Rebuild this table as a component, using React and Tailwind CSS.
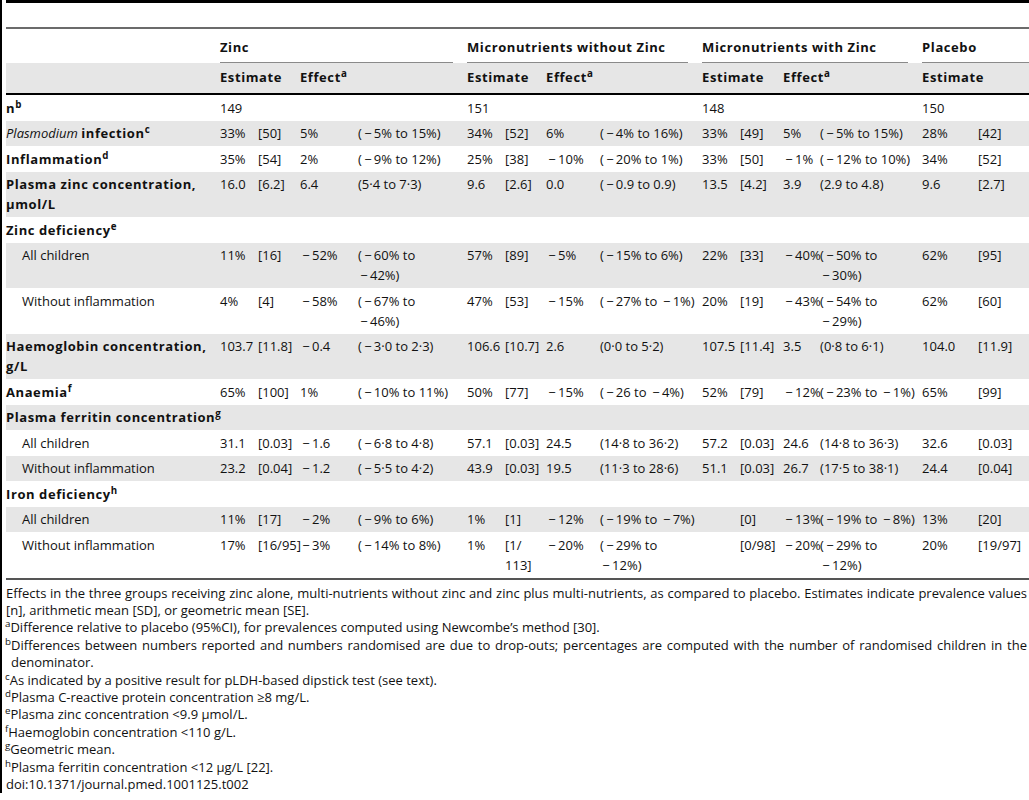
import React from "react";

const M = "−";

function fmtLine(s, key) {
  const parts = s.split(M);
  const out = [];
  parts.forEach((p, i) => {
    if (i > 0)
      out.push(
        <span key={key + "m" + i} className="inline-block w-[12px] text-center">
          {M}
        </span>
      );
    if (p) out.push(<span key={key + "p" + i}>{p}</span>);
  });
  return out;
}

function Cell({ text }) {
  const lines = (text || "").split("\n");
  return (
    <td className="p-0 py-[2.75px] align-top whitespace-nowrap leading-[20px]">
      {lines.map((l, i) => (
        <React.Fragment key={i}>
          {i > 0 && <br />}
          {fmtLine(l, "l" + i)}
        </React.Fragment>
      ))}
    </td>
  );
}

const B = "font-bold tracking-[0.045em]";

const rows = [
  {
    label: (
      <span className={B}>
        n<sup>b</sup>
      </span>
    ),
    vals: ["149", "", "", "", "151", "", "", "", "148", "", "", "", "150", ""],
    shaded: false,
  },
  {
    label: (
      <span>
        <span className="italic">Plasmodium</span>{" "}
        <span className={B}>
          infection<sup>c</sup>
        </span>
      </span>
    ),
    vals: ["33%", "[50]", "5%", "(−5% to 15%)", "34%", "[52]", "6%", "(−4% to 16%)", "33%", "[49]", "5%", "(−5% to 15%)", "28%", "[42]"],
    shaded: true,
  },
  {
    label: (
      <span className={B}>
        Inflammation<sup>d</sup>
      </span>
    ),
    vals: ["35%", "[54]", "2%", "(−9% to 12%)", "25%", "[38]", "−10%", "(−20% to 1%)", "33%", "[50]", "−1%", "(−12% to 10%)", "34%", "[52]"],
    shaded: false,
  },
  {
    label: (
      <span className={B}>
        Plasma zinc concentration,
        <br />
        μmol/L
      </span>
    ),
    vals: ["16.0", "[6.2]", "6.4", "(5·4 to 7·3)", "9.6", "[2.6]", "0.0", "(−0.9 to 0.9)", "13.5", "[4.2]", "3.9", "(2.9 to 4.8)", "9.6", "[2.7]"],
    shaded: true,
  },
  {
    label: (
      <span className={B}>
        Zinc deficiency<sup>e</sup>
      </span>
    ),
    vals: [],
    shaded: false,
  },
  {
    label: "All children",
    sub: true,
    vals: ["11%", "[16]", "−52%", "(−60% to\n−42%)", "57%", "[89]", "−5%", "(−15% to 6%)", "22%", "[33]", "−40%", "(−50% to\n−30%)", "62%", "[95]"],
    shaded: true,
  },
  {
    label: "Without inflammation",
    sub: true,
    vals: ["4%", "[4]", "−58%", "(−67% to\n−46%)", "47%", "[53]", "−15%", "(−27% to −1%)", "20%", "[19]", "−43%", "(−54% to\n−29%)", "62%", "[60]"],
    shaded: false,
  },
  {
    label: (
      <span className={B}>
        Haemoglobin concentration,
        <br />
        g/L
      </span>
    ),
    vals: ["103.7", "[11.8]", "−0.4", "(−3·0 to 2·3)", "106.6", "[10.7]", "2.6", "(0·0 to 5·2)", "107.5", "[11.4]", "3.5", "(0·8 to 6·1)", "104.0", "[11.9]"],
    shaded: true,
  },
  {
    label: (
      <span className={B}>
        Anaemia<sup>f</sup>
      </span>
    ),
    vals: ["65%", "[100]", "1%", "(−10% to 11%)", "50%", "[77]", "−15%", "(−26 to −4%)", "52%", "[79]", "−12%", "(−23% to −1%)", "65%", "[99]"],
    shaded: false,
  },
  {
    label: (
      <span className={B}>
        Plasma ferritin concentration<sup>g</sup>
      </span>
    ),
    vals: [],
    shaded: true,
  },
  {
    label: "All children",
    sub: true,
    vals: ["31.1", "[0.03]", "−1.6", "(−6·8 to 4·8)", "57.1", "[0.03]", "24.5", "(14·8 to 36·2)", "57.2", "[0.03]", "24.6", "(14·8 to 36·3)", "32.6", "[0.03]"],
    shaded: false,
  },
  {
    label: "Without inflammation",
    sub: true,
    vals: ["23.2", "[0.04]", "−1.2", "(−5·5 to 4·2)", "43.9", "[0.03]", "19.5", "(11·3 to 28·6)", "51.1", "[0.03]", "26.7", "(17·5 to 38·1)", "24.4", "[0.04]"],
    shaded: true,
  },
  {
    label: (
      <span className={B}>
        Iron deficiency<sup>h</sup>
      </span>
    ),
    vals: [],
    shaded: false,
  },
  {
    label: "All children",
    sub: true,
    vals: ["11%", "[17]", "−2%", "(−9% to 6%)", "1%", "[1]", "−12%", "(−19% to −7%)", "", "[0]", "−13%", "(−19% to −8%)", "13%", "[20]"],
    shaded: true,
  },
  {
    label: "Without inflammation",
    sub: true,
    vals: ["17%", "[16/95]", "−3%", "(−14% to 8%)", "1%", "[1/\n113]", "−20%", "(−29% to\n−12%)", "", "[0/98]", "−20%", "(−29% to\n−12%)", "20%", "[19/97]"],
    shaded: false,
    last: true,
  },
];

const colWidths = [
  "w-[214px]",
  "w-[38px]",
  "w-[42px]",
  "w-[58px]",
  "w-[109px]",
  "w-[38px]",
  "w-[41px]",
  "w-[54px]",
  "w-[102px]",
  "w-[38px]",
  "w-[43px]",
  "w-[37px]",
  "w-[102px]",
  "w-[56px]",
  "w-[51px]",
];

function GroupHead({ span, children, last }) {
  return (
    <th colSpan={span} className="p-0 text-left font-bold tracking-[0.045em] align-top">
      <div
        className={
          "pt-[8px] pb-[5px] border-b border-[#8a8a8a] leading-[20px] whitespace-nowrap " +
          (last ? "" : "mr-[14px]")
        }
      >
        {children}
      </div>
    </th>
  );
}

function SubHead({ span, children }) {
  return (
    <th
      colSpan={span}
      className="p-0 pt-[4px] pb-[6px] text-left font-bold tracking-[0.045em] align-top leading-[20px] whitespace-nowrap border-b-2 border-black"
    >
      {children}
    </th>
  );
}

function Foot({ children, justify, className = "" }) {
  return (
    <div
      className={
        "whitespace-nowrap " +
        (justify ? "text-justify [text-align-last:justify] " : "") +
        className
      }
    >
      {children}
    </div>
  );
}

export default function App() {
  return (
    <div className="w-[1029px] h-[800px] bg-white flex overflow-hidden text-[#111111] font-['Open_Sans',sans-serif]">
      <div className="w-[2px] h-[793px] bg-black shrink-0" />
      <div className="w-[4px] shrink-0" />
      <div className="flex-1 flex flex-col">
        <div className="h-[3px] bg-black shrink-0" />
        <div className="h-[24px] shrink-0" />
        <div className="h-[2px] bg-[#6b6b6b] shrink-0" />
        <table className="table-fixed border-collapse w-[1023px] text-[13px]">
          <colgroup>
            {colWidths.map((w, i) => (
              <col key={i} className={w} />
            ))}
          </colgroup>
          <thead>
            <tr>
              <th className="p-0" />
              <GroupHead span={4}>Zinc</GroupHead>
              <GroupHead span={4}>Micronutrients without Zinc</GroupHead>
              <GroupHead span={4}>Micronutrients with Zinc</GroupHead>
              <GroupHead span={2} last>
                Placebo
              </GroupHead>
            </tr>
            <tr className="bg-[#e6e6e6]">
              <SubHead span={1}>{""}</SubHead>
              <SubHead span={2}>Estimate</SubHead>
              <SubHead span={2}>
                Effect<sup>a</sup>
              </SubHead>
              <SubHead span={2}>Estimate</SubHead>
              <SubHead span={2}>
                Effect<sup>a</sup>
              </SubHead>
              <SubHead span={2}>Estimate</SubHead>
              <SubHead span={2}>
                Effect<sup>a</sup>
              </SubHead>
              <SubHead span={2}>Estimate</SubHead>
            </tr>
          </thead>
          <tbody>
            {rows.map((r, i) => (
              <tr
                key={i}
                className={
                  (r.shaded ? "bg-[#e6e6e6] " : "") +
                  (r.last ? "border-b-2 border-[#555555]" : "")
                }
              >
                <td
                  className={
                    "p-0 py-[2.75px] align-top whitespace-nowrap leading-[20px] " +
                    (r.sub ? "pl-[16px]" : "")
                  }
                >
                  {r.label}
                </td>
                {Array.from({ length: 14 }).map((_, j) => (
                  <Cell key={j} text={r.vals[j] || ""} />
                ))}
              </tr>
            ))}
          </tbody>
        </table>
        <div className="mt-[5px] text-[13px] leading-[17.4px] w-[1021px]">
          <Foot justify>
            Effects in the three groups receiving zinc alone, multi-nutrients without zinc and zinc plus multi-nutrients, as compared to placebo. Estimates indicate prevalence values
          </Foot>
          <Foot>[n], arithmetic mean [SD], or geometric mean [SE].</Foot>
          <Foot className="-ml-[1px]">
            <sup>a</sup>Difference relative to placebo (95%CI), for prevalences computed using Newcombe’s method [30].
          </Foot>
          <Foot justify className="-ml-[1px]">
            <sup>b</sup>Differences between numbers reported and numbers randomised are due to drop-outs; percentages are computed with the number of randomised children in the
          </Foot>
          <Foot className="pl-[5px]">denominator.</Foot>
          <Foot className="-ml-[1px]">
            <sup>c</sup>As indicated by a positive result for pLDH-based dipstick test (see text).
          </Foot>
          <Foot className="-ml-[1px]">
            <sup>d</sup>Plasma C-reactive protein concentration ≥8 mg/L.
          </Foot>
          <Foot className="-ml-[1px]">
            <sup>e</sup>Plasma zinc concentration &lt;9.9 μmol/L.
          </Foot>
          <Foot className="-ml-[1px]">
            <sup>f</sup>Haemoglobin concentration &lt;110 g/L.
          </Foot>
          <Foot className="-ml-[1px]">
            <sup>g</sup>Geometric mean.
          </Foot>
          <Foot className="-ml-[1px]">
            <sup>h</sup>Plasma ferritin concentration &lt;12 μg/L [22].
          </Foot>
          <Foot>doi:10.1371/journal.pmed.1001125.t002</Foot>
        </div>
      </div>
    </div>
  );
}
